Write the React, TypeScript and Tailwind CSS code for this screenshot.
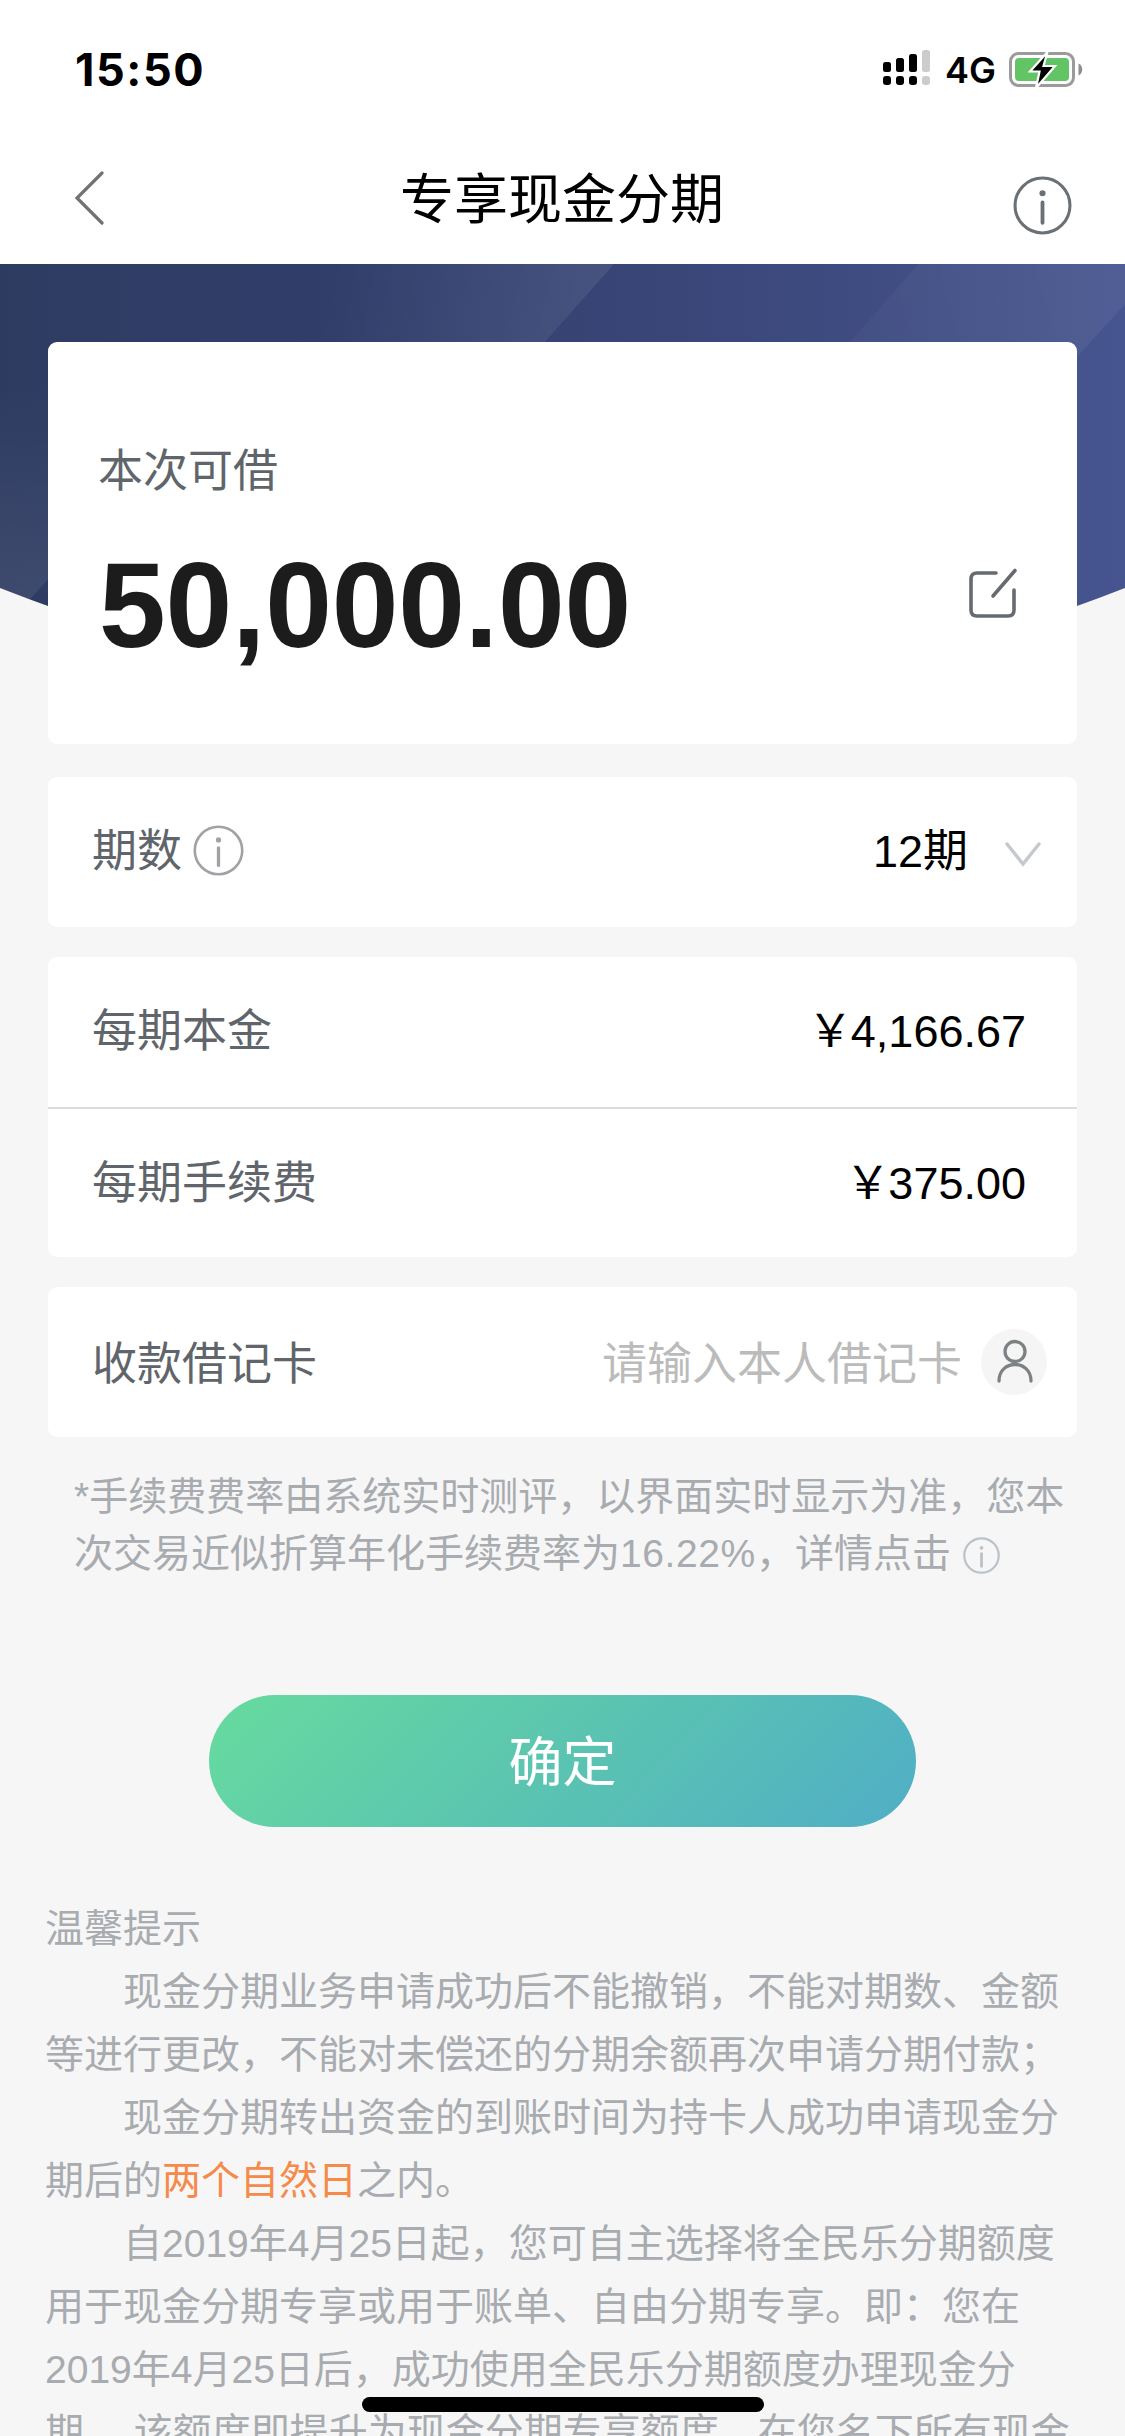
import type { ReactNode } from 'react';

type InfoProps = { size: number; color: string; stroke: number };

function InfoIcon({ size, color, stroke }: InfoProps) {
  return (
    <svg width={size} height={size} viewBox="0 0 58 58" fill="none" className="shrink-0">
      <circle cx="29" cy="29" r="27" stroke={color} strokeWidth={stroke} />
      <circle cx="29" cy="17" r="3" fill={color} />
      <path d="M29 26V46" stroke={color} strokeWidth={stroke * 1.25} strokeLinecap="round" />
    </svg>
  );
}

function StatusBar() {
  return (
    <div className="flex h-[132px] items-start justify-between pl-[75px] pr-[42px]">
      <div className="mt-[43px] font-['Inter'] text-[45px] leading-[54px] font-bold tracking-[1.6px] text-black">15:50</div>
      <div className="mt-[43px] flex h-[54px] items-center">
        <svg width="48" height="36" viewBox="0 0 48 36" className="mb-[5px]">
          <g fill="#000">
            <rect x="0" y="12" width="8" height="10" rx="2.5" />
            <rect x="13" y="8" width="8" height="14" rx="2.5" />
            <rect x="26" y="4" width="8" height="18" rx="2.5" />
            <rect x="0" y="26" width="8" height="9" rx="3" />
            <rect x="13" y="26" width="8" height="9" rx="3" />
            <rect x="26" y="26" width="8" height="9" rx="3" />
          </g>
          <g fill="#ccc">
            <rect x="39" y="0" width="8" height="22" rx="2.5" />
            <rect x="39" y="26" width="8" height="9" rx="3" />
          </g>
        </svg>
        <div className="ml-[14px] w-[64px] font-['Inter'] text-[36px] font-semibold text-black">4G</div>
        <svg width="74" height="38" viewBox="0 0 74 38">
          <rect x="1.5" y="2.5" width="63" height="32" rx="8" fill="#fff" stroke="#9b9b9b" strokeWidth="3" />
          <path d="M69.500 12.500c5 2 5 10 0 12z" fill="#8e8e8e" />
          <rect x="6" y="7" width="54" height="23" rx="4" fill="#63c466" />
          <path d="M38.500 1L21 20.500h9.500L27 37 46 15H34.500z" fill="#000" stroke="#fff" strokeWidth="2.200" />
        </svg>
      </div>
    </div>
  );
}

function Card({ className, children }: { className: string; children: ReactNode }) {
  return <section className={`relative mx-[48px] rounded-[9px] bg-white ${className}`}>{children}</section>;
}

function Row({ label, children }: { label: ReactNode; children: ReactNode }) {
  return (
    <div className="flex h-[150px] items-center justify-between pl-[44px] text-[45px] leading-[60px] text-black">
      <div className="flex items-center text-[#5f656b]">{label}</div>
      {children}
    </div>
  );
}

function Amount({ value }: { value: string }) {
  return (
    <span className="pr-[51px]">
      <span className="mr-[-2px] pl-[2px]">￥</span>
      {value}
    </span>
  );
}

const paragraphs: { text: ReactNode; indent?: boolean }[] = [
  { text: '温馨提示' },
  { text: '现金分期业务申请成功后不能撤销，不能对期数、金额', indent: true },
  { text: '等进行更改，不能对未偿还的分期余额再次申请分期付款；' },
  { text: '现金分期转出资金的到账时间为持卡人成功申请现金分', indent: true },
  { text: <>期后的<span className="text-[#f58a4b]">两个自然日</span>之内。</> },
  { text: '自2019年4月25日起，您可自主选择将全民乐分期额度', indent: true },
  { text: '用于现金分期专享或用于账单、自由分期专享。即：您在' },
  { text: '2019年4月25日后，成功使用全民乐分期额度办理现金分' },
  { text: '期， 该额度即提升为现金分期专享额度，在您名下所有现金' },
];

export default function App() {
  return (
    <main lang="zh-CN" className="relative h-[2436px] w-[1125px] overflow-hidden bg-[#f6f6f6] font-['Liberation_Sans','Noto_Sans_CJK_SC',sans-serif]">
      <header className="h-[264px] bg-white">
        <StatusBar />
        <nav className="grid h-[132px] grid-cols-[1fr_auto_1fr] items-center pl-[74px] pr-[53px]">
          <svg width="58" height="54" viewBox="0 0 58 54" fill="none">
            <path d="M28 2L3 27l25 25" stroke="#707274" strokeWidth="3.200" strokeLinecap="round" />
          </svg>
          <h1 className="mt-[3px] mr-[22px] text-[54px] leading-[72px] text-black">专享现金分期</h1>
          <div className="mt-[15px] justify-self-end">
            <InfoIcon size={59} color="#6b7074" stroke={3} />
          </div>
        </nav>
      </header>

      <div className="relative pt-[78px]">
        <svg className="absolute top-0 left-0" width="1125" height="400" viewBox="0 0 1125 400">
          <defs>
            <linearGradient id="base" x1="0" y1="0" x2="1" y2="0">
              <stop offset="0" stopColor="#2e3b61" />
              <stop offset="0.3" stopColor="#313e6a" />
              <stop offset="0.6" stopColor="#3a4678" />
              <stop offset="1" stopColor="#46558f" />
            </linearGradient>
            <linearGradient id="sheen" gradientUnits="userSpaceOnUse" x1="330" y1="0" x2="590" y2="60">
              <stop offset="0" stopColor="#fff" stopOpacity="0" />
              <stop offset="1" stopColor="#fff" stopOpacity="0.075" />
            </linearGradient>
            <linearGradient id="wash" gradientUnits="userSpaceOnUse" x1="860" y1="60" x2="1080" y2="0">
              <stop offset="0" stopColor="#fff" stopOpacity="0.025" />
              <stop offset="1" stopColor="#fff" stopOpacity="0.055" />
            </linearGradient>
            <linearGradient id="lower" x1="0" y1="0" x2="0" y2="1">
              <stop offset="0" stopColor="#fff" stopOpacity="0" />
              <stop offset="1" stopColor="#fff" stopOpacity="0.080" />
            </linearGradient>
            <clipPath id="dome">
              <path d="M0 0H1125V324Q562 545 0 324Z" />
            </clipPath>
          </defs>
          <g clipPath="url(#dome)">
            <rect width="1125" height="400" fill="url(#base)" />
            <path d="M300 0H614L536 88H300Z" fill="url(#sheen)" />
            <path d="M918 0H1125V40L1065 106H826Z" fill="url(#wash)" />
            <path d="M0 120H60V302L24 342H0Z" fill="url(#lower)" />
          </g>
        </svg>

        <Card className="flex h-[402px] items-start justify-between pl-[50px] pr-[55px]">
          <div>
            <div className="mt-[100px] text-[45px] leading-[60px] text-[#5f656b]">本次可借</div>
            <div className="mt-[35px] pl-[1px] text-[120px] leading-[136px] font-bold tracking-[-0.2px] text-[#1c1c1c]">50,000.00</div>
          </div>
          <svg width="56" height="56" viewBox="0 0 56 56" fill="none" className="mt-[223px]">
            <path d="M30 8H11Q5 8 5 14V45Q5 51 11 51H42Q48 51 48 45V25M27 31L49 5.500" stroke="#666b71" strokeWidth="3.600" strokeLinecap="round" />
          </svg>
        </Card>
      </div>

      <Card className="mt-[33px] h-[150px]">
        <Row label={<>期数<span className="mb-[4px] ml-[11px]"><InfoIcon size={51} color="#a0a3a6" stroke={3} /></span></>}>
          <div className="flex items-center pr-[34px]">
            <span>12期</span>
            <svg width="40" height="30" viewBox="0 0 40 30" fill="none" className="mt-[5px] ml-[35px]">
              <path d="M4 4L20 24 36 4" stroke="#c5c8cc" strokeWidth="3.400" strokeLinecap="round" />
            </svg>
          </div>
        </Row>
      </Card>

      <Card className="mt-[30px] h-[300px]">
        <Row label="每期本金"><Amount value="4,166.67" /></Row>
        <div className="border-t-2 border-[#dcdddf]">
          <Row label="每期手续费"><Amount value="375.00" /></Row>
        </div>
      </Card>

      <Card className="mt-[30px] h-[150px]">
        <Row label={<span className="mt-[5px]">收款借记卡</span>}>
          <div className="flex items-center pr-[30px]">
            <span className="mt-[5px] text-[#bbb]">请输入本人借记卡</span>
            <svg width="66" height="66" viewBox="0 0 66 66" fill="none" className="ml-[19px]">
              <circle cx="33" cy="33" r="33" fill="#f5f5f5" />
              <circle cx="34" cy="22.500" r="10" stroke="#7d8184" strokeWidth="3.300" />
              <path d="M18 52C18 30 50 30 50 52" stroke="#7d8184" strokeWidth="3.300" strokeLinecap="round" />
            </svg>
          </div>
        </Row>
      </Card>

      <div className="mt-[31px] pl-[74px] text-[39px] leading-[57px] whitespace-nowrap text-[#a8abaf]">
        <div>*手续费费率由系统实时测评，以界面实时显示为准，您本</div>
        <div className="flex items-center">
          次交易近似折算年化手续费率为<span className="tracking-[0.6px]">16.22%</span>，详情点击
          <span className="mt-[3px] ml-[12px]"><InfoIcon size={37} color="#bcc2c9" stroke={3.5} /></span>
        </div>
      </div>

      <button className="ml-[209px] mt-[113px] block h-[132px] w-[707px] rounded-full bg-[linear-gradient(135deg,#67db9e_0%,#5cc6af_45%,#50aec6_100%)] pt-[5px] text-[54px] leading-[127px] text-white">
        确定
      </button>

      <div className="mt-[70px] pl-[45px] text-[39px] leading-[63px] whitespace-nowrap text-[#a8abaf]">
        {paragraphs.map((p, i) => (
          <p key={i} className={p.indent ? 'pl-[78px]' : ''}>{p.text}</p>
        ))}
      </div>

      <div className="absolute bottom-[24px] left-[362px] h-[15px] w-[402px] rounded-full bg-black" />
    </main>
  );
}
